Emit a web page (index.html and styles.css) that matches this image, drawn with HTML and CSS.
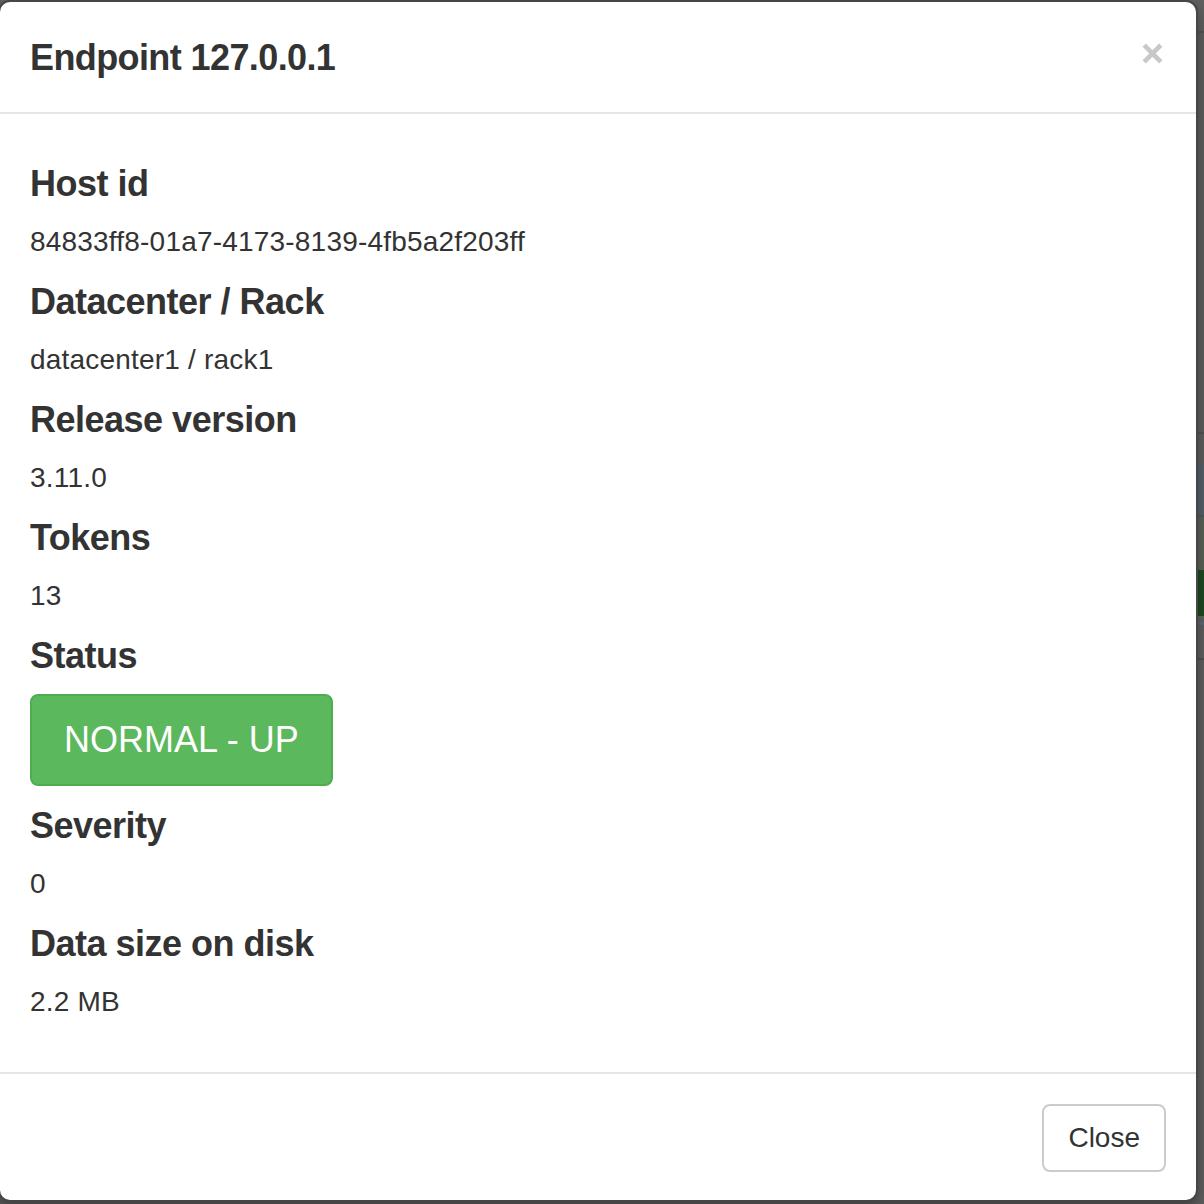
FILE: index.html
```html
<!DOCTYPE html>
<html lang="en">
<head>
<meta charset="utf-8">
<title>Endpoint 127.0.0.1</title>
<link rel="stylesheet" href="styles.css">
</head>
<body>
<div class="modal">
  <div class="modal-header">
    <h3 class="modal-title">Endpoint 127.0.0.1</h3>
    <button class="close" type="button" aria-label="Close">
      <svg width="21" height="21" viewBox="0 0 21 21" aria-hidden="true">
        <path d="M2.2 2.2 L18.8 18.8 M18.8 2.2 L2.2 18.8" stroke="#c8c8c8" stroke-width="4.6" fill="none"/>
      </svg>
    </button>
  </div>
  <div class="modal-body">
    <h4>Host id</h4>
    <p>84833ff8-01a7-4173-8139-4fb5a2f203ff</p>
    <h4>Datacenter / Rack</h4>
    <p>datacenter1 / rack1</p>
    <h4>Release version</h4>
    <p>3.11.0</p>
    <h4>Tokens</h4>
    <p>13</p>
    <h4>Status</h4>
    <p><span class="btn btn-success btn-lg">NORMAL - UP</span></p>
    <h4>Severity</h4>
    <p>0</p>
    <h4>Data size on disk</h4>
    <p>2.2 MB</p>
  </div>
  <div class="modal-footer">
    <button class="btn btn-default" type="button">Close</button>
  </div>
</div>
</body>
</html>
```
FILE: styles.css
```css
html, body {
  margin: 0;
  padding: 0;
}

body {
  height: 1204px;
  overflow: hidden;
  font-family: "Liberation Sans", Arial, sans-serif;
  color: #333333;
  background: linear-gradient(to bottom,
    #606060 0, #606060 31px,
    #545454 31px, #545454 33px,
    #5e5e5e 33px, #5e5e5e 432px,
    #525252 432px, #525252 434px,
    #5e5e5e 434px, #5e5e5e 463px,
    #56606a 463px, #56606a 515px,
    #4f5a5e 515px, #4f5a5e 517px,
    #5a6257 517px, #5a6257 570px,
    #1f4a22 570px, #1f4a22 616px,
    #5b6858 616px, #5b6858 619px,
    #606060 619px, #606060 622px,
    #56697a 622px, #56697a 625px,
    #5f5f5f 625px, #5f5f5f 658px,
    #505050 658px, #505050 660px,
    #5f5f5f 660px, #5f5f5f 100%);
}

.modal {
  box-sizing: border-box;
  width: 1200px;
  margin-left: -2px;
  background: #ffffff;
  border: 2px solid #464646;
  border-radius: 12px;
  box-shadow: 0 6px 14px rgba(0, 0, 0, 0.35);
}

.modal-header {
  display: flex;
  justify-content: space-between;
  align-items: flex-start;
  padding: 30px 30px 29px;
  border-bottom: 2px solid #e5e5e5;
}

.modal-title {
  margin: 1px 0 0;
  font-size: 36px;
  line-height: 50px;
  font-weight: 700;
  letter-spacing: -0.6px;
  color: #333333;
}

.close {
  display: block;
  margin: 11px 3px 0 0;
  padding: 0;
  border: 0;
  background: transparent;
  width: 21px;
  height: 21px;
}

.close svg {
  display: block;
}

.modal-body {
  padding: 30px 30px 30px;
}

.modal-body h4 {
  margin: 20px 0 18px;
  font-size: 36px;
  line-height: 40px;
  font-weight: 700;
  letter-spacing: -0.5px;
  color: #333333;
}

.modal-body p {
  margin: 0 0 20px;
  font-size: 28px;
  line-height: 40px;
  letter-spacing: 0.2px;
}

.btn {
  display: inline-block;
  box-sizing: border-box;
  font-family: "Liberation Sans", Arial, sans-serif;
  border: 2px solid transparent;
  border-radius: 8px;
  text-align: center;
  vertical-align: top;
}

.btn-success {
  color: #ffffff;
  background: #5cb85c;
  border-color: #4cae4c;
}

.btn-lg {
  padding: 20px 32px;
  font-size: 36px;
  line-height: 48px;
  letter-spacing: 0;
}

.modal-footer {
  display: flex;
  justify-content: flex-end;
  padding: 30px 30px 28px;
  border-top: 2px solid #e5e5e5;
}

.btn-default {
  color: #333333;
  background: #ffffff;
  border-color: #cccccc;
  padding: 12px 24px;
  font-size: 28px;
  line-height: 40px;
}
```
